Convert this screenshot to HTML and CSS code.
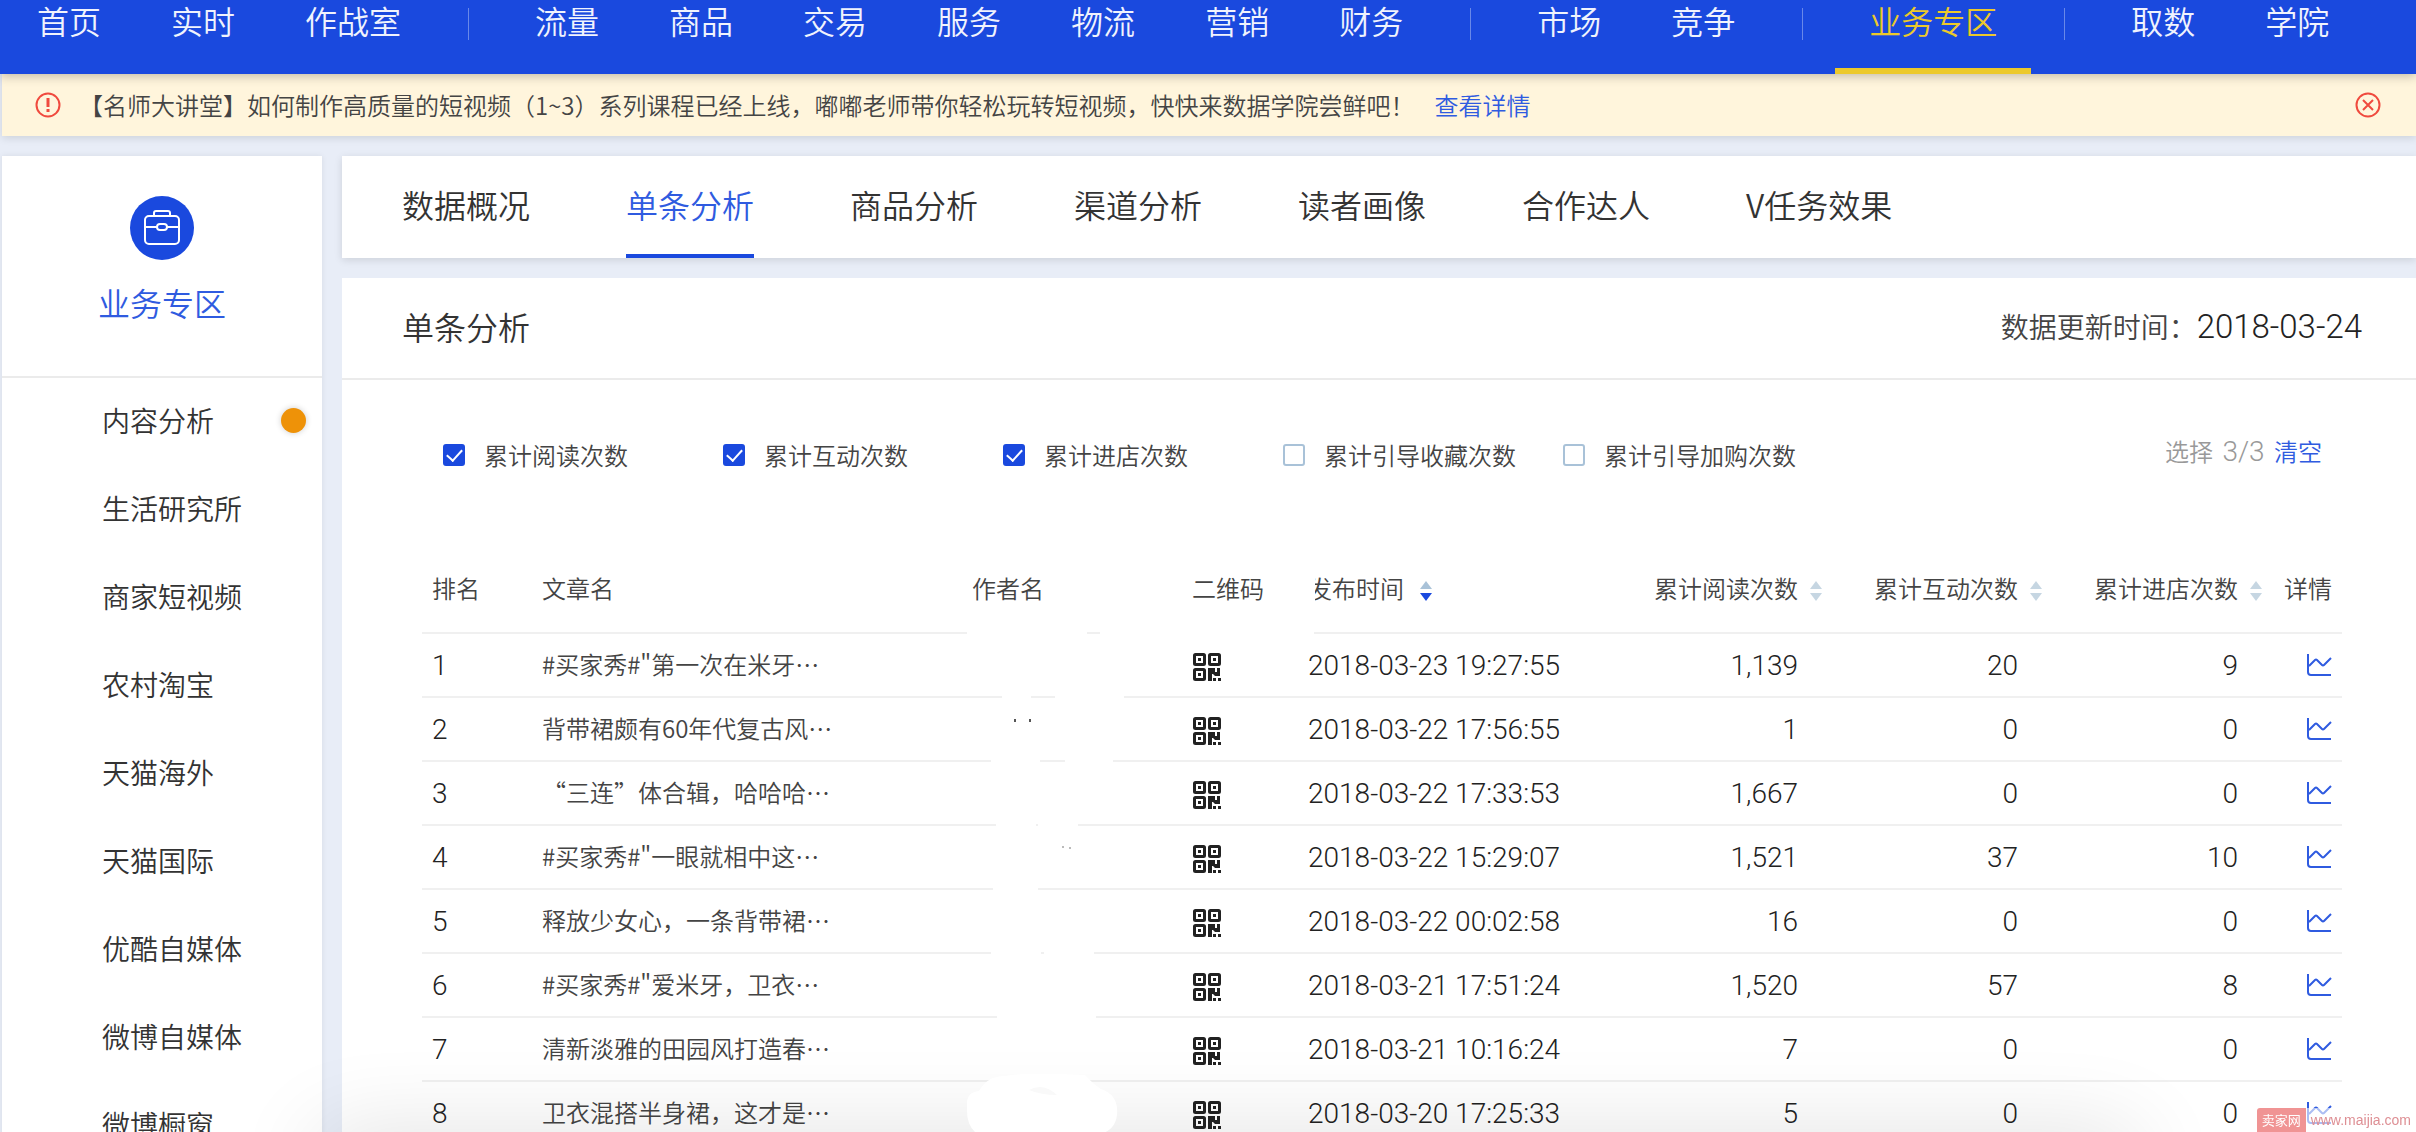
FILE: index.html
```html
<!DOCTYPE html>
<html lang="zh-CN">
<head>
  <meta charset="utf-8">
  <title>业务专区 - 单条分析</title>
  <link rel="stylesheet" href="styles.css">
</head>
<body>
  <svg class="sprite" xmlns="http://www.w3.org/2000/svg">
    <symbol id="qr" viewBox="0 0 28 28">
      <g fill="none" stroke="#222" stroke-width="3">
        <rect x="1.5" y="1.5" width="10" height="10" rx="1"></rect>
        <rect x="16.5" y="1.5" width="10" height="10" rx="1"></rect>
        <rect x="1.5" y="16.5" width="10" height="10" rx="1"></rect>
      </g>
      <path fill="#222" d="M5 5h3v3H5zM20 5h3v3h-3zM5 20h3v3H5zM15 15h7v4h2v-4h3v8h-5l-2-2h-1v7h-4zM20 25h3v3h-3zM25 25h3v3h-3z"></path>
    </symbol>
    <symbol id="chart" viewBox="0 0 26 24">
      <path d="M2 1v18q0 3 3 3h20M3 13l6-6q1-1 2 0l5 5q1 1 2 0l7-7" fill="none" stroke="#2f5be0" stroke-width="2"></path>
    </symbol>
    <symbol id="sort" viewBox="0 0 12 20">
      <path class="up" d="M6 0l6 8H0z"></path>
      <path class="down" d="M6 20l6-8H0z"></path>
    </symbol>
  </svg>

  <nav class="top-nav">
    <a href="#">首页</a>
    <a href="#">实时</a>
    <a href="#">作战室</a>
    <span class="sep"></span>
    <a href="#">流量</a>
    <a href="#">商品</a>
    <a href="#">交易</a>
    <a href="#">服务</a>
    <a href="#">物流</a>
    <a href="#">营销</a>
    <a href="#">财务</a>
    <span class="sep"></span>
    <a href="#">市场</a>
    <a href="#">竞争</a>
    <span class="sep"></span>
    <a href="#" class="active">业务专区</a>
    <span class="sep"></span>
    <a href="#">取数</a>
    <a href="#">学院</a>
  </nav>

  <div class="notice">
    <svg class="notice-icon" viewBox="0 0 26 26" fill="none" stroke="#f04a3e" stroke-width="2">
      <circle cx="13" cy="13" r="11.5"></circle>
      <path d="M13 6v9M13 17v3" stroke-width="3"></path>
    </svg>
    <p>【名师大讲堂】如何制作高质量的短视频（1~3）系列课程已经上线，嘟嘟老师带你轻松玩转短视频，快快来数据学院尝鲜吧！</p>
    <a href="#">查看详情</a>
    <button class="notice-close" aria-label="关闭">
      <svg viewBox="0 0 26 26" fill="none" stroke="#f04a3e" stroke-width="2">
        <circle cx="13" cy="13" r="11.5"></circle>
        <path d="M8 8l10 10M18 8L8 18"></path>
      </svg>
    </button>
  </div>

  <div class="layout">
    <aside class="sidebar">
      <div class="sidebar-head">
        <svg viewBox="0 0 64 64">
          <circle cx="32" cy="32" r="32" fill="#1a49de"></circle>
          <g fill="none" stroke="#fff" stroke-width="2">
            <rect x="15" y="20" width="34" height="28" rx="4"></rect>
            <path d="M24 20v-3q0-2 2-2h12q2 0 2 2v3M15 31h12M37 31h12"></path>
            <rect x="27" y="28" width="10" height="6" rx="3"></rect>
          </g>
        </svg>
        <h2>业务专区</h2>
      </div>
      <ul>
        <li><a href="#">内容分析</a><i class="dot"></i></li>
        <li><a href="#">生活研究所</a></li>
        <li><a href="#">商家短视频</a></li>
        <li><a href="#">农村淘宝</a></li>
        <li><a href="#">天猫海外</a></li>
        <li><a href="#">天猫国际</a></li>
        <li><a href="#">优酷自媒体</a></li>
        <li><a href="#">微博自媒体</a></li>
        <li><a href="#">微博橱窗</a></li>
      </ul>
    </aside>

    <main class="main">
      <div class="tabs">
        <a href="#">数据概况</a>
        <a href="#" class="active">单条分析</a>
        <a href="#">商品分析</a>
        <a href="#">渠道分析</a>
        <a href="#">读者画像</a>
        <a href="#">合作达人</a>
        <a href="#">V任务效果</a>
      </div>

      <section class="panel">
        <header class="panel-head">
          <h1>单条分析</h1>
          <p>数据更新时间：<span class="date">2018-03-24</span></p>
        </header>

        <div class="filters">
          <div class="checks">
            <label><input type="checkbox" checked>累计阅读次数</label>
            <label><input type="checkbox" checked>累计互动次数</label>
            <label><input type="checkbox" checked>累计进店次数</label>
            <label><input type="checkbox">累计引导收藏次数</label>
            <label><input type="checkbox">累计引导加购次数</label>
          </div>
          <div class="selected">选择 <span class="count">3/3</span> <a href="#">清空</a></div>
        </div>

        <div class="table-wrap">
          <table>
            <colgroup>
              <col class="c-rank"><col class="c-title"><col class="c-author"><col class="c-qr"><col>
              <col class="c-num"><col class="c-num"><col class="c-num"><col class="c-detail">
            </colgroup>
            <thead>
              <tr>
                <th>排名</th>
                <th>文章名</th>
                <th>作者名</th>
                <th>二维码</th>
                <th>发布时间<button class="sort desc" aria-label="排序"><svg><use href="#sort"></use></svg></button></th>
                <th class="num">累计阅读次数<button class="sort" aria-label="排序"><svg><use href="#sort"></use></svg></button></th>
                <th class="num">累计互动次数<button class="sort" aria-label="排序"><svg><use href="#sort"></use></svg></button></th>
                <th class="num">累计进店次数<button class="sort" aria-label="排序"><svg><use href="#sort"></use></svg></button></th>
                <th class="detail">详情</th>
              </tr>
            </thead>
            <tbody>
              <tr>
                <td class="rank">1</td><td class="title">#买家秀#"第一次在米牙…</td><td></td>
                <td><svg class="qr"><use href="#qr"></use></svg></td>
                <td class="time">2018-03-23 19:27:55</td><td class="num">1,139</td><td class="num">20</td><td class="num">9</td>
                <td class="detail"><a href="#" aria-label="详情"><svg class="chart"><use href="#chart"></use></svg></a></td>
              </tr>
              <tr>
                <td class="rank">2</td><td class="title">背带裙颇有60年代复古风…</td><td></td>
                <td><svg class="qr"><use href="#qr"></use></svg></td>
                <td class="time">2018-03-22 17:56:55</td><td class="num">1</td><td class="num">0</td><td class="num">0</td>
                <td class="detail"><a href="#" aria-label="详情"><svg class="chart"><use href="#chart"></use></svg></a></td>
              </tr>
              <tr>
                <td class="rank">3</td><td class="title">“三连”体合辑，哈哈哈…</td><td></td>
                <td><svg class="qr"><use href="#qr"></use></svg></td>
                <td class="time">2018-03-22 17:33:53</td><td class="num">1,667</td><td class="num">0</td><td class="num">0</td>
                <td class="detail"><a href="#" aria-label="详情"><svg class="chart"><use href="#chart"></use></svg></a></td>
              </tr>
              <tr>
                <td class="rank">4</td><td class="title">#买家秀#"一眼就相中这…</td><td></td>
                <td><svg class="qr"><use href="#qr"></use></svg></td>
                <td class="time">2018-03-22 15:29:07</td><td class="num">1,521</td><td class="num">37</td><td class="num">10</td>
                <td class="detail"><a href="#" aria-label="详情"><svg class="chart"><use href="#chart"></use></svg></a></td>
              </tr>
              <tr>
                <td class="rank">5</td><td class="title">释放少女心，一条背带裙…</td><td></td>
                <td><svg class="qr"><use href="#qr"></use></svg></td>
                <td class="time">2018-03-22 00:02:58</td><td class="num">16</td><td class="num">0</td><td class="num">0</td>
                <td class="detail"><a href="#" aria-label="详情"><svg class="chart"><use href="#chart"></use></svg></a></td>
              </tr>
              <tr>
                <td class="rank">6</td><td class="title">#买家秀#"爱米牙，卫衣…</td><td></td>
                <td><svg class="qr"><use href="#qr"></use></svg></td>
                <td class="time">2018-03-21 17:51:24</td><td class="num">1,520</td><td class="num">57</td><td class="num">8</td>
                <td class="detail"><a href="#" aria-label="详情"><svg class="chart"><use href="#chart"></use></svg></a></td>
              </tr>
              <tr>
                <td class="rank">7</td><td class="title">清新淡雅的田园风打造春…</td><td></td>
                <td><svg class="qr"><use href="#qr"></use></svg></td>
                <td class="time">2018-03-21 10:16:24</td><td class="num">7</td><td class="num">0</td><td class="num">0</td>
                <td class="detail"><a href="#" aria-label="详情"><svg class="chart"><use href="#chart"></use></svg></a></td>
              </tr>
              <tr>
                <td class="rank">8</td><td class="title">卫衣混搭半身裙，这才是…</td><td></td>
                <td><svg class="qr"><use href="#qr"></use></svg></td>
                <td class="time">2018-03-20 17:25:33</td><td class="num">5</td><td class="num">0</td><td class="num">0</td>
                <td class="detail"><a href="#" aria-label="详情"><svg class="chart"><use href="#chart"></use></svg></a></td>
              </tr>
            </tbody>
          </table>
          <!-- author names brushed out -->
          <svg class="erase" viewBox="0 0 400 590" fill="#fff">
            <path d="M17 80h120v16H17zM150 80h214v16H150zM357 20h8v46h-8z"></path>
            <path d="M52 146q14-8 29 0v12H52zM105 146h69v12h-69zM41 210h49v12H41zM115 210h48v12h-48zM46 274h40v12H46zM88 274h40v12H88zM43 338h45v12H43zM41 402h50v12H41zM94 402h50v12H94zM47 466h99v12H47z"></path>
            <path d="M17 560q-1-14 12-15q8-15 26-15q20-4 80-1q8 9 16 14q18 6 16 26q-2 16-18 19q-20 3-28 0q-2 12-50 10q-44 2-46-12q-9-8-8-26z"></path>
            <path d="M79 544q14-8 28 5q-16 0-28-5z" fill="#f9f9f9"></path>
            <path d="M64 173h2v3h-2zM79 173h2v3h-2z" fill="#555"></path>
            <path d="M112 300h2v2h-2zM119 301h2v2h-2z" fill="#bbb"></path>
          </svg>
        </div>
      </section>
    </main>
  </div>

  <div class="bottom-shade"></div>
  <div class="watermark"><b>卖家网</b><span>www.maijia.com</span></div>
</body>
</html>
```
FILE: styles.css
```css
:root {
  --blue: #1a49de;
  --link: #2f5be0;
  --text: #333;
  --line: #f0f0f0;
  --bg: #e8edf7;
  --number: Roboto, Arial, sans-serif;
}

* {
  box-sizing: border-box;
}

body {
  margin: 0;
  height: 100vh;
  overflow: hidden;
  background: var(--bg);
  color: var(--text);
  font-family: "Noto Sans CJK SC", sans-serif;
  font-size: 24px;
  font-weight: 350;
}

h1, h2, p, ul {
  margin: 0;
  padding: 0;
  font-weight: 350;
}

a {
  color: var(--link);
  text-decoration: none;
}

button {
  padding: 0;
  border: none;
  background: none;
  cursor: pointer;
}

svg {
  display: block;
}

.sprite {
  position: absolute;
  width: 0;
  height: 0;
}

/* top navigation */
.top-nav {
  position: relative;
  display: flex;
  gap: 2px;
  height: 74px;
  padding-left: 3px;
  background: var(--blue);
  box-shadow: 0 2px 10px rgba(0, 0, 0, 0.25);
  font-size: 32px;
  line-height: 40px;
  white-space: nowrap;
}

.top-nav a {
  padding: 0 34px;
  color: #f0f3fd;
}

.top-nav a.active {
  color: #ecc92b;
  border-bottom: 6px solid #ecc92b;
}

.top-nav .sep {
  width: 1px;
  height: 32px;
  margin: 8px 30px 0 31px;
  background: rgba(255, 255, 255, 0.35);
}

/* notice */
.notice {
  display: flex;
  align-items: center;
  height: 62px;
  margin-left: 2px;
  padding: 0 35px 0 33px;
  background: #fff5dc;
  box-shadow: 0 2px 8px rgba(0, 0, 0, 0.12);
  color: #444;
  line-height: 60px;
  white-space: nowrap;
}

.notice svg {
  width: 26px;
  height: 26px;
}

.notice-icon {
  margin-right: 18px;
}

.notice a {
  margin-left: 20px;
}

.notice-close {
  margin-left: auto;
}

/* layout */
.layout {
  display: flex;
  align-items: flex-start;
  gap: 20px;
  padding: 20px 0 0 2px;
}

.sidebar {
  flex: none;
  width: 320px;
  background: #fff;
  box-shadow: 0 0 6px rgba(0, 0, 0, 0.08);
}

.sidebar-head {
  display: flex;
  flex-direction: column;
  align-items: center;
  height: 222px;
  padding-top: 40px;
  border-bottom: 2px solid #ebebeb;
}

.sidebar-head svg {
  width: 64px;
  height: 64px;
}

.sidebar-head h2 {
  margin-top: 18px;
  color: var(--link);
  font-size: 32px;
  line-height: 48px;
}

.sidebar ul {
  list-style: none;
}

.sidebar li {
  display: flex;
  align-items: center;
  justify-content: space-between;
  height: 88px;
  padding: 0 16px 4px 100px;
  font-size: 28px;
}

.sidebar li a {
  color: var(--text);
}

.dot {
  width: 25px;
  height: 25px;
  border-radius: 50%;
  background: #ee9208;
  box-shadow: 0 0 6px rgba(0, 0, 0, 0.2);
}

.main {
  flex: 1;
  min-width: 0;
}

.tabs {
  display: flex;
  gap: 96px;
  height: 102px;
  padding-left: 60px;
  background: #fff;
  box-shadow: 0 2px 8px rgba(0, 0, 0, 0.12);
  font-size: 32px;
  line-height: 96px;
}

.tabs a {
  color: var(--text);
}

.tabs a.active {
  color: var(--link);
  border-bottom: 4px solid var(--blue);
}

.panel {
  margin-top: 20px;
  background: #fff;
}

.panel-head {
  display: flex;
  align-items: center;
  justify-content: space-between;
  height: 102px;
  padding: 0 54px 4px 60px;
  border-bottom: 2px solid #ebebeb;
}

.panel-head h1 {
  font-size: 32px;
}

.panel-head p {
  color: #444;
  font-size: 28px;
}

.date {
  color: #222;
  font-family: var(--number);
  font-size: 33px;
}

/* metric filters */
.filters {
  display: flex;
  justify-content: space-between;
  align-items: flex-start;
  height: 166px;
  padding: 50px 94px 0 101px;
  color: #444;
}

.checks {
  display: flex;
}

.checks label {
  display: flex;
  align-items: center;
  width: 280px;
  line-height: 50px;
  white-space: nowrap;
}

.checks input {
  flex: none;
  appearance: none;
  width: 22px;
  height: 22px;
  margin: 0 19px 0 0;
  border: 2px solid #a9c2d8;
  border-radius: 3px;
}

.checks input:checked {
  border-color: var(--blue);
  background: var(--blue);
}

.checks input:checked::after {
  content: "";
  display: block;
  width: 7px;
  height: 13px;
  margin: 0 auto;
  border: solid #fff;
  border-width: 0 2px 2px 0;
  transform: rotate(42deg);
}

.selected {
  color: #999;
  line-height: 42px;
}

.count {
  margin: 0 4px;
  font-family: var(--number);
  font-size: 28px;
}

/* table */
.table-wrap {
  position: relative;
  padding: 0 74px 0 80px;
}

table {
  width: 100%;
  table-layout: fixed;
  border-spacing: 0;
  color: #444;
}

.c-rank { width: 110px; }
.c-title { width: 430px; }
.c-author { width: 220px; }
.c-qr { width: 116px; }
.c-num { width: 220px; }
.c-detail { width: 74px; }

th, td {
  padding: 0 10px;
  border-bottom: 2px solid var(--line);
  text-align: left;
  font-weight: 350;
  white-space: nowrap;
}

th {
  height: 88px;
  padding-bottom: 4px;
}

td {
  height: 64px;
}

td.title {
  padding-bottom: 4px;
}

.rank, .time, td.num, .date, .count {
  font-weight: 300;
}

.rank, .time, td.num {
  color: #222;
  font-family: var(--number);
  font-size: 28px;
}

.num, .detail {
  text-align: right;
}

td.num {
  padding-right: 30px;
}

th.num {
  padding-right: 6px;
}

.sort {
  margin-left: 12px;
  color: #c6d6e2;
  fill: #c6d6e2;
  vertical-align: middle;
}

.sort svg {
  width: 12px;
  height: 20px;
}

.sort.desc {
  margin-left: 16px;
  color: var(--blue);
  fill: #a9c2d8;
}

.down {
  fill: currentColor;
}

.qr {
  width: 28px;
  height: 28px;
  margin: 4px 0 0 1px;
}

.chart {
  width: 26px;
  height: 24px;
  margin-left: auto;
}

.erase {
  position: absolute;
  top: 0;
  left: 608px;
  z-index: 2;
  width: 400px;
  height: 590px;
  pointer-events: none;
}

/* overlays at the bottom of the window */
.bottom-shade {
  position: fixed;
  right: 300px;
  bottom: -60px;
  left: 340px;
  height: 40px;
  box-shadow: 0 0 90px 20px rgba(0, 0, 0, 0.12);
}

.watermark {
  position: fixed;
  right: 0;
  bottom: 0;
  z-index: 3;
  display: flex;
  height: 24px;
  font-size: 13px;
  line-height: 24px;
}

.watermark b {
  padding: 0 5px;
  border-radius: 3px 0 0 0;
  background: #f09494;
  color: #fff;
  font-weight: 400;
}

.watermark span {
  padding: 0 5px;
  background: rgba(255, 255, 255, 0.6);
  color: #de8f94;
  font-family: "Liberation Sans", Arial, sans-serif;
  font-size: 14px;
}
```
